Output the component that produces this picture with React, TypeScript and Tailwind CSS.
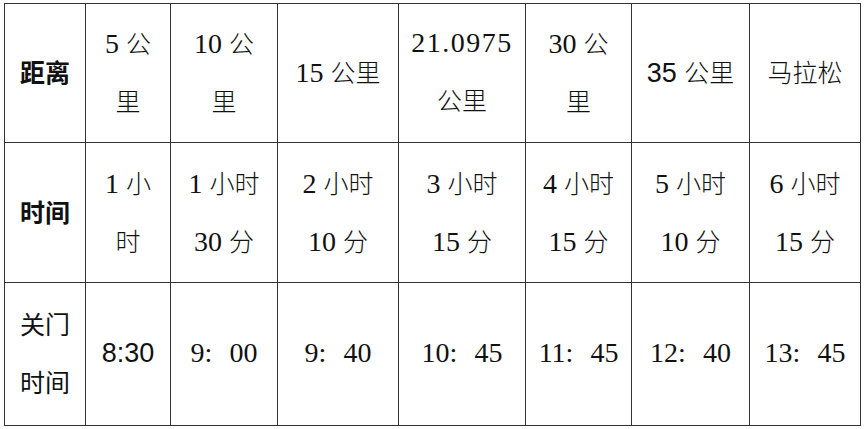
import React from "react";

const D = ({ children, sans }: { children: React.ReactNode; sans?: boolean }) => (
  <span
    className={
      sans
        ? "font-[family-name:'Liberation_Sans',Arial,sans-serif] text-[27px]"
        : "font-[family-name:'Liberation_Serif','Times_New_Roman',serif] text-[28px]"
    }
  >
    {children}
  </span>
);

const C = ({ children }: { children: React.ReactNode }) => (
  <span className="font-[family-name:'Noto_Sans_CJK_SC',sans-serif] text-[25px] font-light">{children}</span>
);

const Colon = () => (
  <span className="font-[family-name:'Liberation_Serif',serif] text-[28px] mr-[17px]">:</span>
);

const Cell = ({ children }: { children: React.ReactNode }) => (
  <div className="flex flex-col items-center justify-center border-r border-b border-[#333] text-center leading-[54px] text-[#111]">
    {children}
  </div>
);

const Line = ({ children }: { children: React.ReactNode }) => (
  <div className="whitespace-pre">{children}</div>
);

export default function App() {
  return (
    <div className="w-[864px] h-[429px] bg-white pl-[4px] pt-[3px] font-[family-name:'Noto_Sans_CJK_SC',sans-serif]">
      <div className="grid w-[856px] grid-cols-[81px_85px_107px_121px_127px_106px_118px_111px] grid-rows-[139px_140px_143px] border-l border-t border-[#333] box-content">
        {/* Row 1 */}
        <Cell>
          <Line>
            <span className="text-[25px] font-bold">距离</span>
          </Line>
        </Cell>
        <Cell>
          <Line>
            <D>5 </D>
            <C>公</C>
          </Line>
          <Line>
            <C>里</C>
          </Line>
        </Cell>
        <Cell>
          <Line>
            <D>10 </D>
            <C>公</C>
          </Line>
          <Line>
            <C>里</C>
          </Line>
        </Cell>
        <Cell>
          <Line>
            <D>15 </D>
            <C>公里</C>
          </Line>
        </Cell>
        <Cell>
          <Line>
            <D>
              <span className="tracking-[1.5px]">21.0975</span>
            </D>
          </Line>
          <Line>
            <C>公里</C>
          </Line>
        </Cell>
        <Cell>
          <Line>
            <D>30 </D>
            <C>公</C>
          </Line>
          <Line>
            <C>里</C>
          </Line>
        </Cell>
        <Cell>
          <Line>
            <D sans>35 </D>
            <C>公里</C>
          </Line>
        </Cell>
        <Cell>
          <Line>
            <C>马拉松</C>
          </Line>
        </Cell>

        {/* Row 2 */}
        <Cell>
          <Line>
            <span className="text-[25px] font-bold">时间</span>
          </Line>
        </Cell>
        <Cell>
          <Line>
            <D>1 </D>
            <C>小</C>
          </Line>
          <Line>
            <C>时</C>
          </Line>
        </Cell>
        <Cell>
          <Line>
            <D>1 </D>
            <C>小时</C>
          </Line>
          <Line>
            <D>30 </D>
            <C>分</C>
          </Line>
        </Cell>
        <Cell>
          <Line>
            <D>2 </D>
            <C>小时</C>
          </Line>
          <Line>
            <D>10 </D>
            <C>分</C>
          </Line>
        </Cell>
        <Cell>
          <Line>
            <D>3 </D>
            <C>小时</C>
          </Line>
          <Line>
            <D>15 </D>
            <C>分</C>
          </Line>
        </Cell>
        <Cell>
          <Line>
            <D>4 </D>
            <C>小时</C>
          </Line>
          <Line>
            <D>15 </D>
            <C>分</C>
          </Line>
        </Cell>
        <Cell>
          <Line>
            <D>5 </D>
            <C>小时</C>
          </Line>
          <Line>
            <D>10 </D>
            <C>分</C>
          </Line>
        </Cell>
        <Cell>
          <Line>
            <D>6 </D>
            <C>小时</C>
          </Line>
          <Line>
            <D>15 </D>
            <C>分</C>
          </Line>
        </Cell>

        {/* Row 3 */}
        <Cell>
          <Line>
            <span className="text-[25px]">关门</span>
          </Line>
          <Line>
            <span className="text-[25px]">时间</span>
          </Line>
        </Cell>
        <Cell>
          <Line>
            <D sans>8:30</D>
          </Line>
        </Cell>
        <Cell>
          <Line>
            <D>9</D>
            <Colon />
            <D>00</D>
          </Line>
        </Cell>
        <Cell>
          <Line>
            <D>9</D>
            <Colon />
            <D>40</D>
          </Line>
        </Cell>
        <Cell>
          <Line>
            <D>10</D>
            <Colon />
            <D>45</D>
          </Line>
        </Cell>
        <Cell>
          <Line>
            <D>11</D>
            <Colon />
            <D>45</D>
          </Line>
        </Cell>
        <Cell>
          <Line>
            <D>12</D>
            <Colon />
            <D>40</D>
          </Line>
        </Cell>
        <Cell>
          <Line>
            <D>13</D>
            <Colon />
            <D>45</D>
          </Line>
        </Cell>
      </div>
    </div>
  );
}
